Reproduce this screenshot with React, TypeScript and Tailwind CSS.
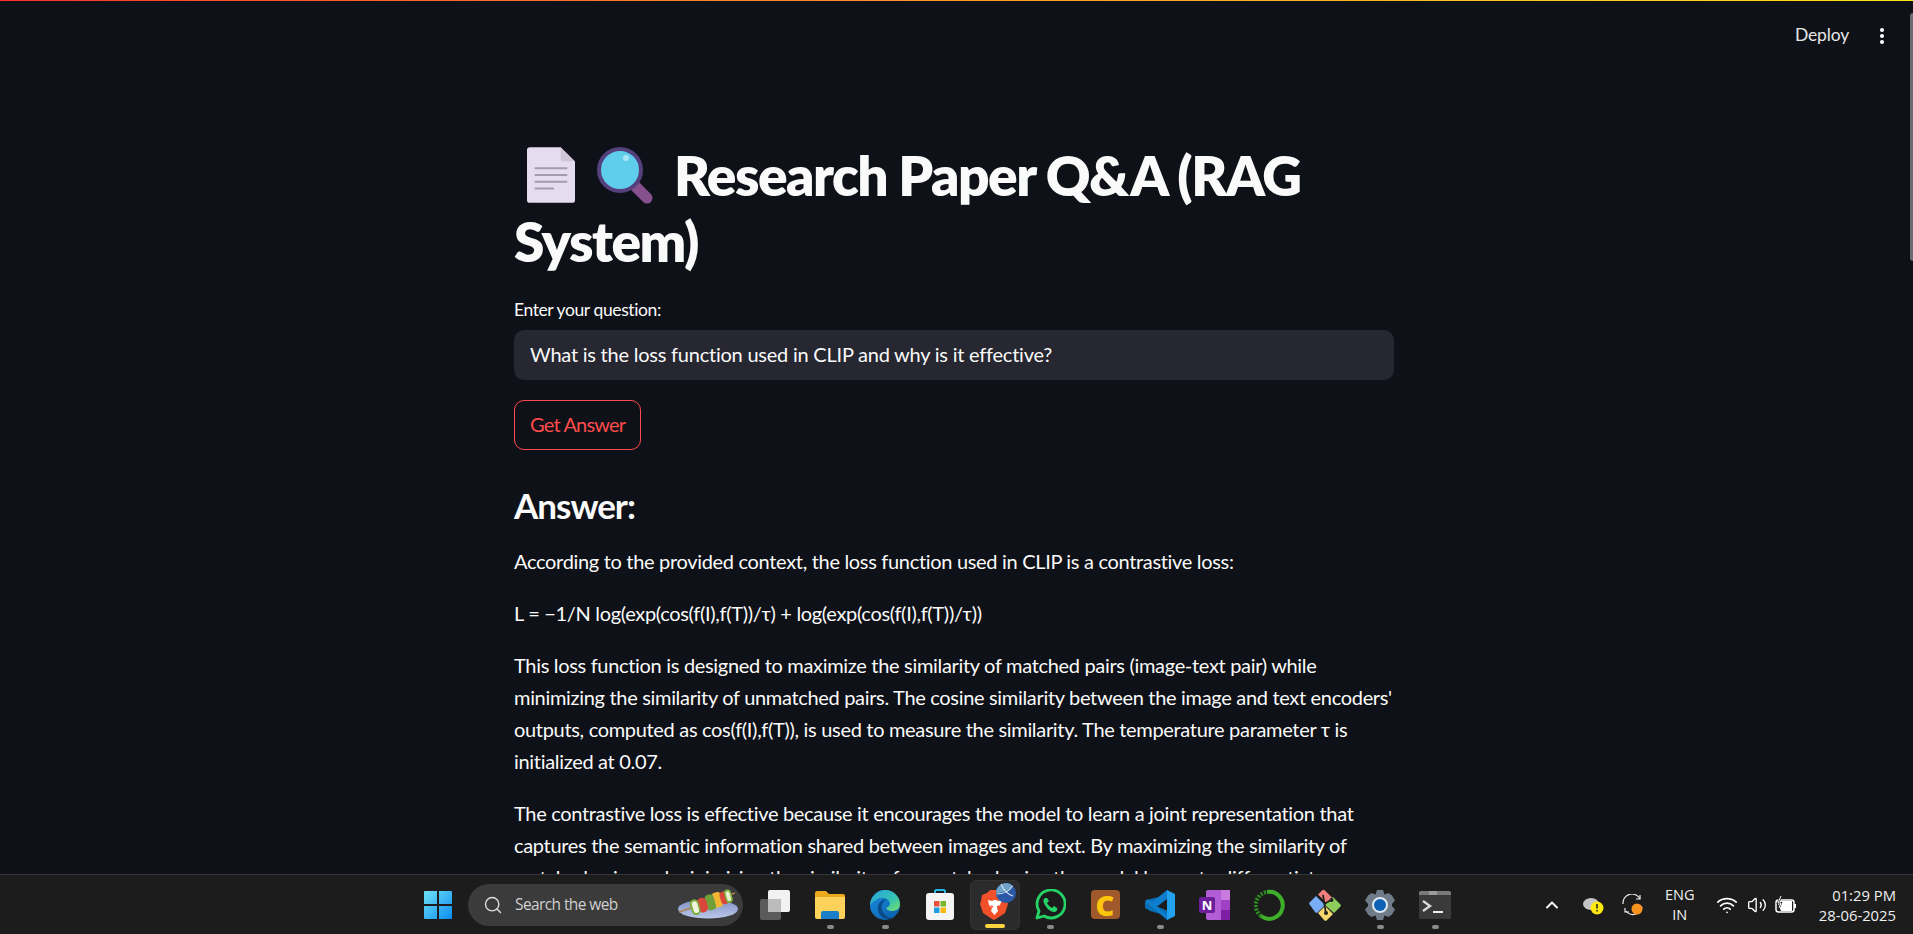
import { ChevronUp, Search, Volume2, Wifi } from 'lucide-react'

const ui = "font-['Lato','Liberation_Sans',sans-serif]"
const sys = "font-['Open_Sans','Noto_Sans',sans-serif]"

function PageEmoji() {
  return (
    <svg viewBox="0 0 50 58" className="h-[58px] w-[48px] shrink-0">
      <path d="M3 0h32l15 15v40a3 3 0 0 1-3 3H3a3 3 0 0 1-3-3V3a3 3 0 0 1 3-3z" fill="#e6dcf0" />
      <path d="M35 0l15 15H38a3 3 0 0 1-3-3z" fill="#cfc6d8" />
      <path d="M8 22h34M8 29h34M8 36h34M8 43h20" stroke="#a49bb0" strokeWidth="2.2" />
    </svg>
  )
}

function LensEmoji() {
  return (
    <svg viewBox="0 0 56 58" className="h-[58px] w-[56px] shrink-0">
      <path d="M36 38l14 14" stroke="#86508f" strokeWidth="11" strokeLinecap="round" />
      <circle cx="23" cy="24" r="21" fill="#5fcdec" stroke="#54407c" strokeWidth="4" />
      <circle cx="29" cy="12" r="3" fill="#a9e6f6" />
    </svg>
  )
}

function TaskIcon({ children, dot, active }: { children: React.ReactNode; dot?: boolean; active?: boolean }) {
  return (
    <div className={`relative flex h-[50px] w-[50px] items-center justify-center rounded-md ${active ? 'border border-[#333] bg-[#2b2b2b]' : ''}`}>
      {children}
      {dot && !active && <span className="absolute bottom-[1px] h-[4px] w-[7px] rounded-full bg-[#8a8a8a]" />}
      {active && <span className="absolute bottom-[1px] h-[4px] w-[20px] rounded-full bg-[#fcd53f]" />}
    </div>
  )
}

function Taskbar() {
  return (
    <footer className={`flex h-[60px] shrink-0 items-center border-t border-[#363636] bg-[#1c1c1c] pl-[413px] text-white ${sys}`}>
      <div className="flex w-[50px] justify-center">
        <svg viewBox="0 0 30 30" className="h-[30px] w-[30px]">
          <defs>
            <linearGradient id="win" x1="0" y1="0" x2="1" y2="1">
              <stop offset="0" stopColor="#6fe0f6" />
              <stop offset="1" stopColor="#0b8cf0" />
            </linearGradient>
          </defs>
          <path d="M1 2a1 1 0 0 1 1-1h12v13H1zM16 1h12a1 1 0 0 1 1 1v12H16zM1 16h13v13H2a1 1 0 0 1-1-1zM16 16h13v12a1 1 0 0 1-1 1H16z" fill="url(#win)" />
        </svg>
      </div>
      <div className="ml-[5px] flex h-[42px] w-[275px] items-center rounded-full bg-[#3b3b3b] pl-[15px]">
        <Search size={20} strokeWidth={1.7} className="text-[#dcdcdc]" />
        <span className="ml-[12px] text-[15.5px] tracking-[-0.6px] text-[#cfcfcf]">Search the web</span>
        <svg viewBox="0 0 62 32" className="ml-auto mr-[4px] h-[32px] w-[62px]">
          <defs>
            <linearGradient id="plate" x1="0" y1="0" x2="0" y2="1">
              <stop offset="0" stopColor="#7f8fc4" />
              <stop offset="1" stopColor="#bcc8ea" />
            </linearGradient>
          </defs>
          <ellipse cx="31" cy="20" rx="30" ry="9.500" fill="url(#plate)" />
          <path d="M2 23L58 4" stroke="#b0804e" strokeWidth="1.500" />
          <g transform="rotate(-16 31 14)">
            <rect x="37" y="6" width="8" height="15" rx="2" fill="#f2b632" />
            <rect x="44" y="7" width="8" height="13" rx="4" fill="#d9473a" />
            <rect x="49" y="6" width="7" height="14" rx="3.500" fill="#7cae3c" />
            <rect x="50.500" y="8" width="4" height="10" rx="2" fill="#e8efd0" />
            <rect x="29" y="6" width="9" height="16" rx="4" fill="#6f9f3a" />
            <rect x="20" y="7" width="10" height="15" rx="5" fill="#d9473a" />
            <rect x="13" y="6.500" width="9" height="16" rx="4.500" fill="#7cae3c" />
            <rect x="15" y="8.500" width="5.500" height="12" rx="2.700" fill="#f2f4df" />
          </g>
        </svg>
      </div>
      <div className="ml-[7px] flex items-center gap-[5px]">
        <TaskIcon>
          <svg viewBox="0 0 30 30" className="h-[30px] w-[30px]">
            <rect x="0" y="9" width="21" height="21" rx="2" fill="#5a5a5a" />
            <rect x="8" y="0" width="22" height="22" rx="2" fill="#f2f2f2" />
            <rect x="8" y="9" width="13" height="13" fill="#bcbcbc" />
          </svg>
        </TaskIcon>
        <TaskIcon dot>
          <svg viewBox="0 0 30 30" className="h-[30px] w-[30px]">
            <path d="M0 3a2 2 0 0 1 2-2h9l3 3h14a2 2 0 0 1 2 2v4H0z" fill="#eba91c" />
            <path d="M0 7h30v20a2 2 0 0 1-2 2H2a2 2 0 0 1-2-2z" fill="#fcd25a" />
            <path d="M6 23a2 2 0 0 1 2-2h14a2 2 0 0 1 2 2v6H6z" fill="#1a7fc8" />
          </svg>
        </TaskIcon>
        <TaskIcon dot>
          <svg viewBox="0 0 30 30" className="h-[30px] w-[30px]">
            <defs>
              <linearGradient id="edgeTop" x1="0" y1="0" x2="1" y2="1">
                <stop offset="0" stopColor="#2aa5de" />
                <stop offset="0.6" stopColor="#35c3b0" />
                <stop offset="1" stopColor="#7be06a" />
              </linearGradient>
              <linearGradient id="edgeLow" x1="0" y1="0" x2="1" y2="1">
                <stop offset="0" stopColor="#1b8fe0" />
                <stop offset="1" stopColor="#0a5ba8" />
              </linearGradient>
            </defs>
            <circle cx="15" cy="15" r="15" fill="url(#edgeLow)" />
            <path d="M0 15C1 6 8 0 15 0c9 0 15 7 15 14 0 5-4 7-8 7-3 0-5-1-6-3 3-1 5-4 3-7-3-4-9-4-13-1-3 2-5 3-6 5z" fill="url(#edgeTop)" />
            <path d="M20 29c-6 1-11-3-12-9-1-6 3-11 9-11-4 2-6 6-5 10 1 6 7 10 13 8-1 1-3 2-5 2z" fill="#0b4c8c" />
          </svg>
        </TaskIcon>
        <TaskIcon>
          <svg viewBox="0 0 30 32" className="h-[32px] w-[30px]">
            <path d="M10 5V2.500A1.500 1.500 0 0 1 11.500 1h7A1.500 1.500 0 0 1 20 2.500V5" fill="none" stroke="#27b4ea" strokeWidth="2" />
            <rect x="1" y="4" width="28" height="27" rx="3" fill="#f4f4f4" />
            <rect x="9" y="12" width="5.500" height="5.500" fill="#e8503a" />
            <rect x="15.500" y="12" width="5.500" height="5.500" fill="#7ab829" />
            <rect x="9" y="18.500" width="5.500" height="5.500" fill="#1d9ce0" />
            <rect x="15.500" y="18.500" width="5.500" height="5.500" fill="#f9b90f" />
          </svg>
        </TaskIcon>
        <TaskIcon active>
          <svg viewBox="0 0 36 36" className="h-[36px] w-[36px] overflow-visible">
            <path d="M5 8l5-2 3-3h10l3 3 5 2-1 6 1 3-3 9-9 6-2 1-2-1-9-6-3-9 1-3z" fill="#f0502a" />
            <path d="M11 13l4 1 2-1h2l2 1 4-1-2 5-3 3 1 3-3.500 4-3.500-4 1-3-3-3z" fill="#fff" />
            <path d="M14 19l2 1M22 19l-2 1" stroke="#f0502a" strokeWidth="1.500" />
            <circle cx="29" cy="6" r="10" fill="#2a57a6" />
            <path d="M19 6a10 10 0 0 1 17-7c-5 5-11 7-17 7z" fill="#6fa3c8" />
            <path d="M19.500 7c7 0 13-3 16-8M24 -3c2 5 6 10 12 12" stroke="#cfe0ee" strokeWidth="1.100" fill="none" />
          </svg>
        </TaskIcon>
        <TaskIcon dot>
          <svg viewBox="0 0 32 32" className="h-[32px] w-[32px]">
            <path d="M3 29l2-7A14 14 0 1 1 10 27z" fill="none" stroke="#25d366" strokeWidth="2.800" strokeLinejoin="round" />
            <path d="M11 9c-2 1-2 4 0 7 2 4 6 7 9 7 2 0 4-2 3-4l-3-2-2 2c-2-1-4-3-5-5l2-2-2-3z" fill="#25d366" />
          </svg>
        </TaskIcon>
        <TaskIcon>
          <div className={`flex h-[29px] w-[29px] items-center justify-center rounded-sm bg-[#a0592a] text-[29px] font-black leading-none text-[#fdc50b] ${sys}`}>C</div>
        </TaskIcon>
        <TaskIcon dot>
          <svg viewBox="0 0 32 32" className="h-[32px] w-[32px]">
            <path d="M6 10L1 13v6l5 3 18-16zM6 22l18 5v-5L10 16z" fill="#0a6eb4" />
            <path d="M1 12l3-2 20 17-1 4-8-7z" fill="#0e7fce" />
            <path d="M23 1l8 4v22l-8 4z" fill="#21a1ee" />
            <path d="M23 1v9L11 19l-5-4z" fill="#0e7fce" />
          </svg>
        </TaskIcon>
        <TaskIcon>
          <svg viewBox="0 0 32 32" className="h-[32px] w-[32px]">
            <rect x="7" y="1" width="24" height="30" rx="2" fill="#b15dd6" />
            <rect x="22" y="1" width="9" height="10" fill="#c97be0" />
            <rect x="22" y="11" width="9" height="10" fill="#a040c4" />
            <rect x="22" y="21" width="9" height="10" fill="#7c1fa5" />
            <rect x="0" y="8" width="16" height="16" rx="2" fill="#6d1f9a" />
            <text x="8" y="21" textAnchor="middle" fontSize="13" fontWeight="700" fill="#fff" fontFamily="Open Sans">N</text>
          </svg>
        </TaskIcon>
        <TaskIcon>
          <svg viewBox="0 0 32 32" className="h-[32px] w-[32px]">
            <path d="M13 3a13.500 13.500 0 1 1-6 24" fill="none" stroke="#3fae2a" strokeWidth="4" />
            <path d="M7 27A13.500 13.500 0 0 1 13 3" fill="none" stroke="#2f8f22" strokeWidth="4" strokeDasharray="2 1.500" />
          </svg>
        </TaskIcon>
        <TaskIcon>
          <svg viewBox="0 0 32 32" className="h-[32px] w-[32px]">
            <path d="M10 1.500a2 2 0 0 1 3 0l6 6a2 2 0 0 1 0 3l-4 4-9-9z" transform="translate(3 0)" fill="#ef7f7f" />
            <path d="M1 13l6-6 9 9-7 7a2 2 0 0 1-3 0l-5-7a2 2 0 0 1 0-3z" fill="#79aef7" />
            <path d="M16 16l8-8 7 7a2 2 0 0 1 0 3l-6 6z" fill="#8fce5c" />
            <path d="M9 24l7-7 8 8-6 6a2 2 0 0 1-3 0z" fill="#f5d76e" />
            <path d="M14 6l3 19M17 14l5-3" stroke="#222" strokeWidth="1.700" />
            <circle cx="22.500" cy="11" r="2" fill="#222" />
            <circle cx="17" cy="24" r="2" fill="#222" />
          </svg>
        </TaskIcon>
        <TaskIcon dot>
          <svg viewBox="0 0 32 32" className="h-[32px] w-[32px]">
            <path d="M13 1h6l1.500 4.500 4-1.500 3.500 2.500 3 5-3 3.500v2l3 3.500-3 5-3.500 2.500-4-1.500L19 31h-6l-1.500-4.500-4 1.500L4 25.500l-3-5L4 17v-2l-3-3.500 3-5L7.500 4l4 1.500z" fill="#6f7b88" />
            <circle cx="16" cy="16" r="8" fill="#dfe7ef" />
            <circle cx="16" cy="16" r="6" fill="#0d62b6" />
          </svg>
        </TaskIcon>
        <TaskIcon dot>
          <svg viewBox="0 0 32 28" className="h-[28px] w-[32px]">
            <rect x="0" y="0" width="32" height="28" rx="2" fill="#3a3a3a" />
            <path d="M2 0h28a2 2 0 0 1 2 2v2H0V2a2 2 0 0 1 2-2z" fill="#7a7a7a" />
            <rect x="10" y="0" width="8" height="4" fill="#9a9a9a" />
            <path d="M4 10l7 5-7 5" fill="none" stroke="#d8d8d8" strokeWidth="2.400" />
            <path d="M14 21h10" stroke="#eee" strokeWidth="2" />
          </svg>
        </TaskIcon>
      </div>
      <div className="ml-auto mr-[17px] flex items-center">
        <ChevronUp size={20} strokeWidth={2.4} className="text-[#f2f2f2]" />
        <svg viewBox="0 0 22 20" className="ml-[21px] h-[20px] w-[22px]">
          <ellipse cx="8" cy="9" rx="8" ry="6" fill="#c5c5c5" />
          <circle cx="14" cy="13" r="6.500" fill="#fde910" />
          <path d="M14 9v4.500M14 15v1.500" stroke="#222" strokeWidth="1.500" />
        </svg>
        <svg viewBox="0 0 22 22" className="ml-[17px] h-[22px] w-[22px]">
          <path d="M1 10A9 9 0 0 1 18 5M20 13A9 9 0 0 1 4 17" fill="none" stroke="#eee" strokeWidth="1.200" />
          <path d="M18 1v4h-4M3 14v4h4" fill="none" stroke="#eee" strokeWidth="1.200" />
          <circle cx="15" cy="15" r="5.500" fill="#f7931e" />
        </svg>
        <div className="ml-[18px] w-[36px] text-center text-[14.5px] leading-[20px] text-[#f0f0f0]">ENG<br />IN</div>
        <Wifi size={22} strokeWidth={1.9} className="ml-[18px] text-white" />
        <Volume2 size={20} strokeWidth={1.6} className="ml-[9px] text-white" />
        <svg viewBox="0 0 22 18" className="ml-[8px] h-[18px] w-[22px]">
          <rect x="1" y="4" width="18" height="12" rx="2.500" fill="none" stroke="#fff" strokeWidth="1.500" />
          <rect x="19" y="8" width="2" height="4" fill="#fff" />
          <path d="M2 5h15v10H6z" fill="#fff" />
          <path d="M6 0L3 7h3l-2 5" fill="none" stroke="#1c1c1c" strokeWidth="2" />
          <path d="M6 0L3 7h3l-2 5" fill="none" stroke="#fff" strokeWidth="1" />
        </svg>
        <div className="ml-[22px] text-right text-[14.8px] leading-[20px] text-[#f0f0f0]">
          01:29 PM<br />28-06-2025
        </div>
      </div>
    </footer>
  )
}

export default function App() {
  return (
    <div className={`flex h-[934px] w-[1913px] flex-col overflow-hidden bg-[#0e1117] text-[#fafafa] ${ui}`}>
      <div className="h-px shrink-0 bg-gradient-to-r from-[#ff2b2b] to-[#ffe312]" />
      <div className="flex min-h-0 flex-1">
        <main className="min-w-0 flex-1 overflow-hidden">
          <header className="flex h-[69px] items-center justify-end pr-[26px] text-[17.5px] text-[#e6e6e6]">
            <span className="tracking-[-0.01em]">Deploy</span>
            <svg viewBox="0 0 4 16" className="ml-[31px] h-[16px] w-[4px] fill-white">
              <circle cx="2" cy="2" r="2" />
              <circle cx="2" cy="8" r="2" />
              <circle cx="2" cy="14" r="2" />
            </svg>
          </header>
          <div className="ml-[514px] w-[880px]">
            <h1 className="whitespace-nowrap pt-[72px] text-[55px] font-extrabold leading-[66px] tracking-[-1.5px]">
              <span className="inline-flex items-center gap-[22px] pl-[13px] pr-[21px] align-[-8px]">
                <PageEmoji />
                <LensEmoji />
              </span>
              Research Paper Q&amp;A (RAG<br />System)
            </h1>
            <label className="mt-[22px] block text-[17.5px] leading-[28px] tracking-[-0.4px]">Enter your question:</label>
            <div className="mt-[6px] flex h-[50px] items-center rounded-[10px] bg-[#262730] px-[16px] pb-[3px] text-[20px] tracking-[-0.23px]">
              What is the loss function used in CLIP and why is it effective?
            </div>
            <button className="mt-[20px] block h-[50px] rounded-[10px] border border-[#ff4b4b] px-[15px] pb-[2px] text-[20px] tracking-[-0.8px] text-[#ff4b4b]">
              Get Answer
            </button>
            <h3 className="mt-[30px] text-[35px] font-bold leading-[50px] tracking-[-1px]">Answer:</h3>
            <div className="mt-[15px] flex flex-col gap-[20px] whitespace-nowrap text-[20px] leading-[32px] tracking-[-0.32px]">
              <p>According to the provided context, the loss function used in CLIP is a contrastive loss:</p>
              <p>L = −1/N log(exp(cos(f(I),f(T))/τ) + log(exp(cos(f(I),f(T))/τ))</p>
              <p>
                This loss function is designed to maximize the similarity of matched pairs (image-text pair) while<br />
                minimizing the similarity of unmatched pairs. The cosine similarity between the image and text encoders'<br />
                outputs, computed as cos(f(I),f(T)), is used to measure the similarity. The temperature parameter τ is<br />
                initialized at 0.07.
              </p>
              <p>
                The contrastive loss is effective because it encourages the model to learn a joint representation that<br />
                captures the semantic information shared between images and text. By maximizing the similarity of<br />
                matched pairs and minimizing the similarity of unmatched pairs, the model learns to differentiate
              </p>
            </div>
          </div>
        </main>
        <div className="flex w-[3px] shrink-0 flex-col items-center">
          <div className="mt-[12px] h-[248px] w-full rounded-l-sm bg-[#6b6d72]" />
        </div>
      </div>
      <Taskbar />
    </div>
  )
}
